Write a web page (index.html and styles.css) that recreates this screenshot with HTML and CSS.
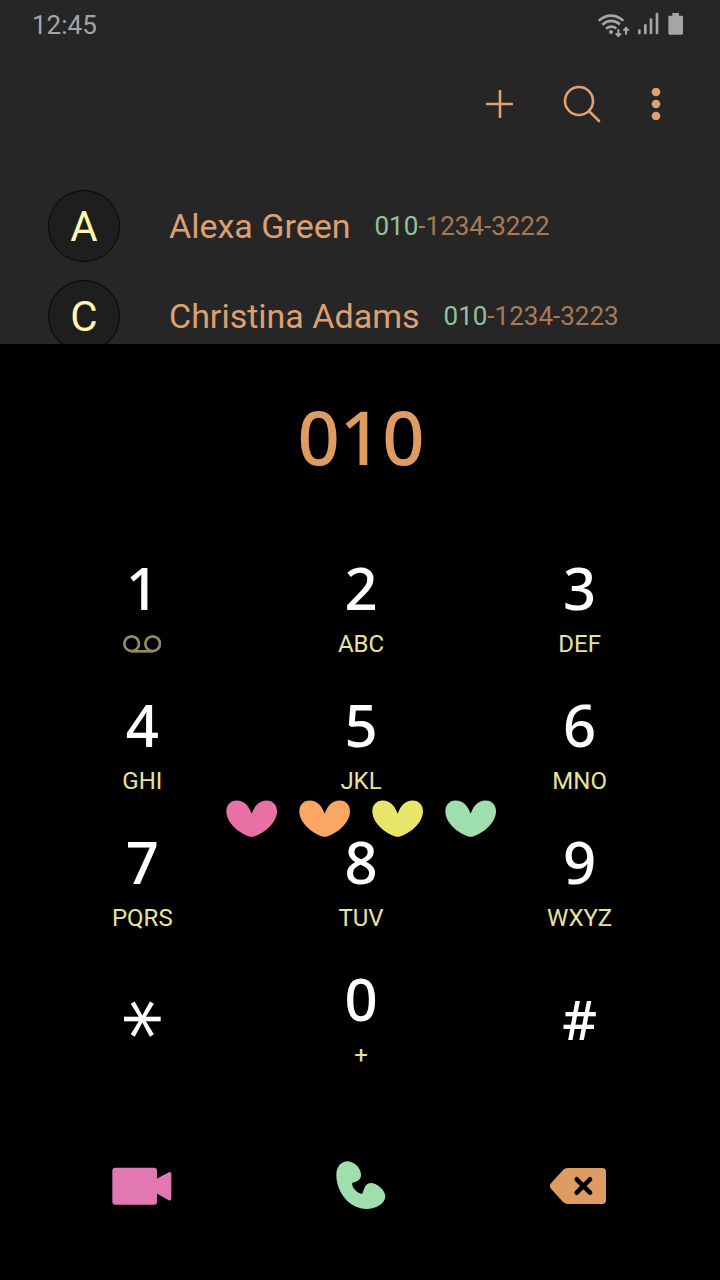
FILE: index.html
```html
<!DOCTYPE html>
<html lang="en">
<head>
<meta charset="utf-8">
<meta name="viewport" content="width=device-width, initial-scale=1">
<title>Phone</title>
<link rel="stylesheet" href="styles.css">
</head>
<body>
<div class="app">
  <section class="contacts">
    <header class="status">
      <time>12:45</time>
      <div class="status-icons">
        <svg width="32" height="26" viewBox="54 36 96 78" fill="none" stroke="#a5a5a5" stroke-width="8">
          <path d="M56 62Q93 32 130 62M67 74Q93 52 120 73M78 86Q93 74 109 85"/>
          <circle cx="93" cy="96" r="6" fill="#a5a5a5" stroke="none"/>
          <path d="M115 87V106M107 100L115 108L123 100M138 104V86M130 92L138 84L146 92" stroke-width="6"/>
        </svg>
        <svg width="22" height="26" viewBox="172 36 66 78" fill="#a5a5a5">
          <rect x="172" y="88" width="8" height="15" rx="3"/><rect x="190" y="72" width="8" height="31" rx="3"/>
          <rect x="207" y="55" width="8" height="48" rx="3"/><rect x="225" y="38" width="8" height="65" rx="3"/>
        </svg>
        <svg width="16" height="26" viewBox="264 36 48 78" fill="#a5a5a5">
          <path d="M277 39H297V47H305Q309 47 309 51V100Q309 104 305 104H269Q265 104 265 100V51Q265 47 269 47H277Z"/>
        </svg>
      </div>
    </header>
    <nav class="toolbar">
      <button type="button" aria-label="Add contact">
        <svg width="28" height="28" viewBox="0 0 28 28" fill="none" stroke="#e0a070" stroke-width="2.6" stroke-linecap="round"><path d="M15 1V27M2 14H27"/></svg>
      </button>
      <button type="button" aria-label="Search">
        <svg width="38" height="38" viewBox="0 0 38 38" fill="none" stroke="#e0a070" stroke-width="2.6" stroke-linecap="round"><circle cx="16" cy="16" r="14"/><path d="M26 26L36 36"/></svg>
      </button>
      <button type="button" aria-label="More options">
        <svg width="10" height="34" viewBox="0 0 10 34" fill="#e0a070"><circle cx="5" cy="5" r="4.300"/><circle cx="5" cy="17" r="4.300"/><circle cx="5" cy="29" r="4.300"/></svg>
      </button>
    </nav>
    <ul class="list">
      <li><a class="contact" href="#alexa"><span class="avatar">A</span><span class="name">Alexa Green</span><span class="phone"><span class="match">010</span>-1234-3222</span></a></li>
      <li><a class="contact" href="#christina"><span class="avatar">C</span><span class="name">Christina Adams</span><span class="phone"><span class="match">010</span>-1234-3223</span></a></li>
    </ul>
  </section>

  <main class="dialer">
    <output class="number">010</output>
    <div class="keypad">
      <button type="button" class="key"><span class="digit">1</span><span class="letters">
        <svg role="img" aria-label="Voicemail" width="38" height="20" viewBox="66 251 114 60" fill="none" stroke="#918c62" stroke-width="8"><circle cx="92" cy="280" r="22"/><circle cx="155" cy="280" r="22"/><path d="M90 303H157"/></svg>
      </span></button>
      <button type="button" class="key"><span class="digit">2</span><span class="letters">ABC</span></button>
      <button type="button" class="key"><span class="digit">3</span><span class="letters">DEF</span></button>
      <button type="button" class="key"><span class="digit">4</span><span class="letters">GHI</span></button>
      <button type="button" class="key"><span class="digit">5</span><span class="letters">JKL</span></button>
      <button type="button" class="key"><span class="digit">6</span><span class="letters">MNO</span></button>
      <button type="button" class="key"><span class="digit">7</span><span class="letters">PQRS</span></button>
      <button type="button" class="key"><span class="digit">8</span><span class="letters">TUV</span></button>
      <button type="button" class="key"><span class="digit">9</span><span class="letters">WXYZ</span></button>
      <button type="button" class="key"><span class="star">*</span></button>
      <button type="button" class="key"><span class="digit">0</span><span class="letters">+</span></button>
      <button type="button" class="key"><span class="hash">#</span></button>
      <div class="hearts" aria-hidden="true">
        <svg class="heart pink" viewBox="0 0 153 110"><path d="M77 41C84 22 96 1 122 1C142 1 153 16 153 33C153 66 118 97 86 108Q77 111 68 108C36 97 1 66 1 33C1 16 12 1 32 1C58 1 70 22 77 41Z"/></svg>
        <svg class="heart orange" viewBox="0 0 153 110"><path d="M77 41C84 22 96 1 122 1C142 1 153 16 153 33C153 66 118 97 86 108Q77 111 68 108C36 97 1 66 1 33C1 16 12 1 32 1C58 1 70 22 77 41Z"/></svg>
        <svg class="heart yellow" viewBox="0 0 153 110"><path d="M77 41C84 22 96 1 122 1C142 1 153 16 153 33C153 66 118 97 86 108Q77 111 68 108C36 97 1 66 1 33C1 16 12 1 32 1C58 1 70 22 77 41Z"/></svg>
        <svg class="heart green" viewBox="0 0 153 110"><path d="M77 41C84 22 96 1 122 1C142 1 153 16 153 33C153 66 118 97 86 108Q77 111 68 108C36 97 1 66 1 33C1 16 12 1 32 1C58 1 70 22 77 41Z"/></svg>
      </div>
    </div>
    <div class="actions">
      <button type="button" aria-label="Video call">
        <svg width="60" height="38" viewBox="66 80 180 114" fill="#e178b2"><rect x="67" y="82" width="134" height="111" rx="9"/><path d="M199 116L234 97Q244 92 244 102V174Q244 184 235 179L199 159Z"/></svg>
      </button>
      <button type="button" aria-label="Call">
        <svg width="50" height="50" viewBox="738 62 150 150" fill="#9fdfad"><path d="M739 103C739 78 755 63 773 63C798 64 815 90 813 107C811 119 798 126 787 127C783 137 800 160 817 160C822 152 822 129 842 128C862 128 886 150 886 168C886 192 855 206 830 206C780 205 739 158 739 103Z"/></svg>
      </button>
      <button type="button" aria-label="Delete">
        <svg width="60" height="38" viewBox="61 591 180 114"><path fill="#df9c62" d="M114 594H218Q229 594 229 605V691Q229 702 218 702H114Q107 702 100 696L64 656Q57 648 64 640L100 600Q107 594 114 594Z"/><path fill="none" stroke="#000" stroke-width="14" stroke-linecap="round" d="M141 628L181 668M181 628L141 668"/></svg>
      </button>
    </div>
  </main>
</div>
</body>
</html>
```
FILE: styles.css
```css
* {
  box-sizing: border-box;
}

body {
  margin: 0;
  background: #000;
  font-family: Roboto, "Liberation Sans", sans-serif;
}

button {
  margin: 0;
  padding: 0;
  border: 0;
  background: none;
  color: inherit;
  font: inherit;
  cursor: pointer;
}

svg {
  display: block;
}

.app {
  display: flex;
  flex-direction: column;
  height: 100vh;
}

.contacts {
  flex: 1 1 0;
  min-height: 0;
  overflow: hidden;
  background: #262626;
}

.status {
  display: flex;
  align-items: center;
  justify-content: space-between;
  height: 50px;
  padding: 0 36px 0 32px;
  color: #a5a5a5;
  font-size: 26px;
}

.status-icons {
  display: flex;
  gap: 8px;
}

.toolbar {
  display: flex;
  align-items: center;
  justify-content: flex-end;
  gap: 50px;
  height: 108px;
  padding-right: 59px;
}

.list {
  margin: 0;
  padding: 23px 0 0;
  list-style: none;
}

.contact {
  display: flex;
  align-items: center;
  height: 90px;
  padding: 0 48px;
  text-decoration: none;
}

.avatar {
  display: flex;
  align-items: center;
  justify-content: center;
  width: 72px;
  height: 72px;
  margin-right: 49px;
  border: 1px solid #050505;
  border-radius: 50%;
  background: #1e1e1e;
  color: #fff9a8;
  font-size: 42px;
}

.name {
  margin-right: 24px;
  color: #dea070;
  font-size: 34px;
}

.phone {
  color: #a97a55;
  font-size: 26px;
}

.match {
  color: #8fc49a;
}

.dialer {
  flex: none;
  padding: 55px 31px 69px 33px;
}

.number {
  display: block;
  color: #df9c62;
  font: 500 74px/76px "Noto Sans", sans-serif;
  text-align: center;
}

.keypad {
  position: relative;
  display: grid;
  grid-template-columns: repeat(3, 1fr);
  row-gap: 37px;
  margin-top: 83px;
}

.key {
  display: flex;
  flex-direction: column;
  align-items: center;
  justify-content: center;
  gap: 12px;
  height: 100px;
  color: #fff;
}

.digit {
  font: 500 58px/60px "Noto Sans", sans-serif;
}

.letters {
  display: flex;
  align-items: center;
  height: 28px;
  color: #e8e2a0;
  font-size: 24px;
}

.star {
  padding-top: 28px;
  font: 80px/80px "DejaVu Sans", sans-serif;
  transform: rotate(90deg);
}

.hash {
  font: 500 54px/60px "Noto Sans", sans-serif;
}

.hearts {
  position: absolute;
  top: 242px;
  right: 0;
  left: 0;
  display: flex;
  justify-content: center;
  gap: 22px;
  pointer-events: none;
}

.heart {
  width: 51px;
  height: 37px;
}

.pink {
  fill: #e870a4;
}

.orange {
  fill: #faa766;
}

.yellow {
  fill: #e8e66a;
}

.green {
  fill: #9fdfad;
}

.actions {
  display: grid;
  grid-template-columns: repeat(3, 1fr);
  justify-items: center;
  align-items: center;
  margin-top: 92px;
}
```
